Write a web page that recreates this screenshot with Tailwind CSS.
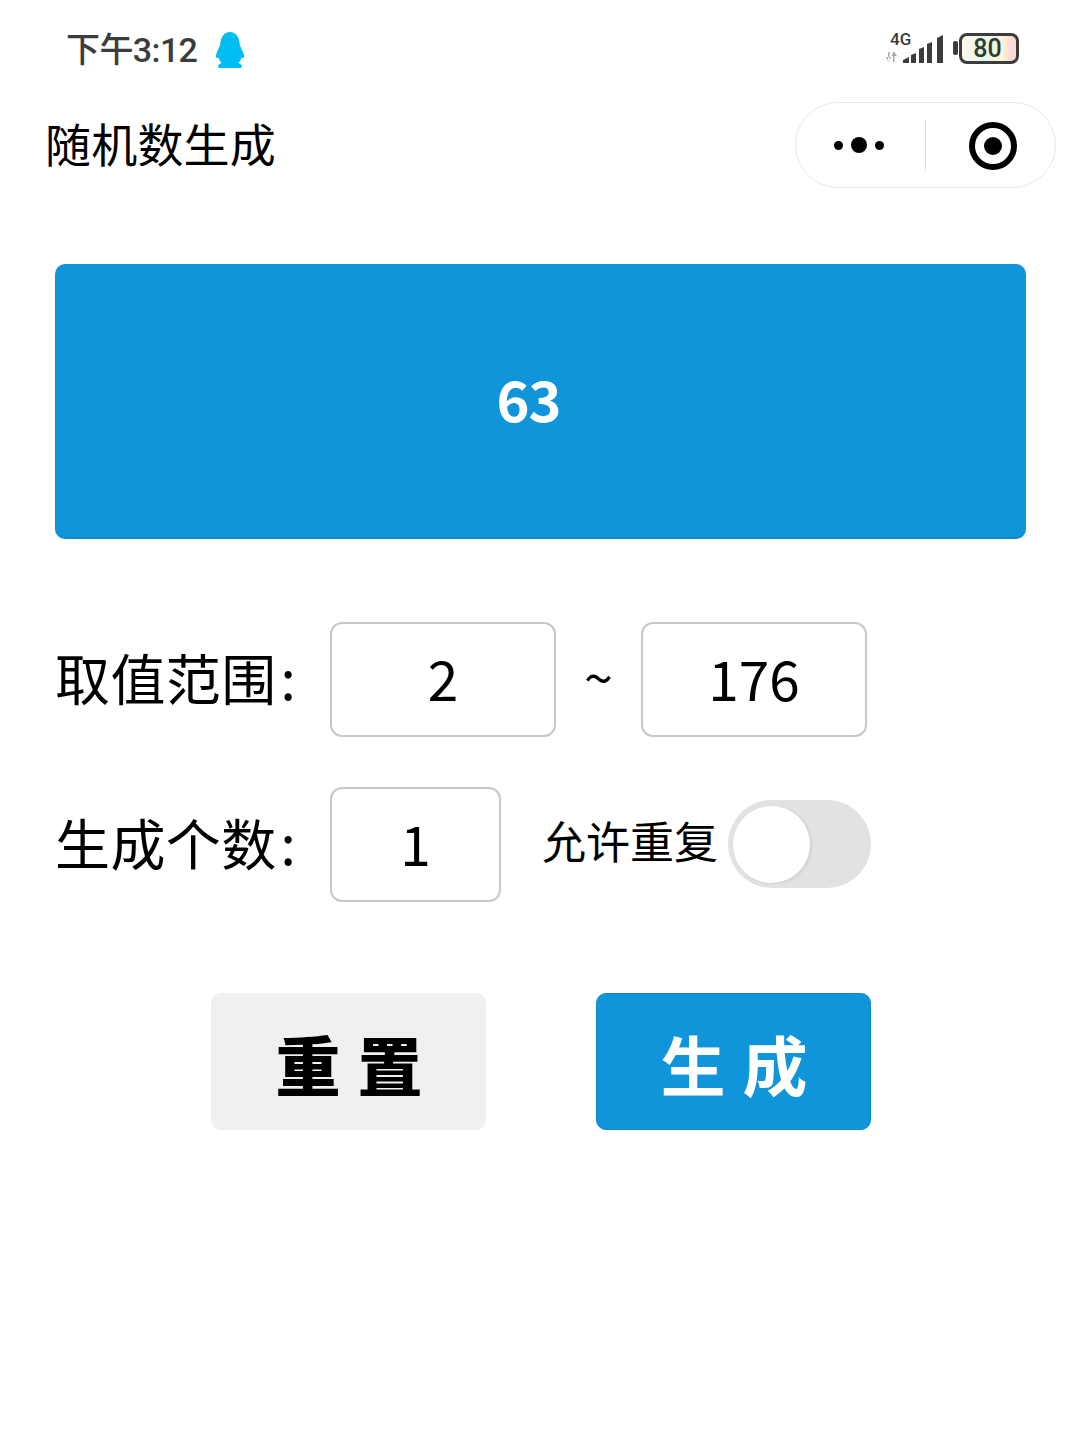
<!DOCTYPE html>
<html><head><meta charset="utf-8"><script src="https://cdn.jsdelivr.net/npm/@tailwindcss/browser@4"></script></head>
<body class="bg-white">
<div class="w-[1080px] h-[1440px] overflow-hidden bg-white text-black font-['Noto_Sans_CJK_SC','Noto_Sans',sans-serif]">
  <!-- status bar -->
  <div class="h-[102px] flex justify-between pl-[66px] pr-[61px] pt-[28px] items-start">
    <div class="flex items-center h-[44px]">
      <span class="text-[34px] leading-[44px] text-[#3c3c3c] font-medium tracking-[-0.6px] font-['Roboto','Noto_Sans_CJK_SC',sans-serif]">下午3:12</span>
      <svg class="ml-[17px]" width="32" height="38" viewBox="0 0 32 38"><path fill="#00bdf2" d="M16 1c6 0 9 5 9.500 11 .2 3 3 7 4.500 12 .6 2.500-.5 4-2.500 2.500-.5 2-1.500 4-3 5.500 2 .8 3.500 2 3.500 3.500 0 .8-1 1.500-2.500 1.500H6.500C5 37 4 36.300 4 35.500 4 34 5.500 32.800 7.500 32 6 30.500 5 28.500 4.500 26.500 2.500 28 1.400 26.500 2 24 3.500 19 6.300 15 6.500 12 7 6 10 1 16 1z"/></svg>
    </div>
    <div class="flex items-start">
      <div class="relative w-[58px] h-[36px]">
        <span class="absolute left-[4px] top-[1px] text-[17px] leading-[20px] font-medium text-[#3c3c3c] font-['Roboto',sans-serif]">4G</span>
        <svg class="absolute left-0 top-0" width="58" height="36" viewBox="0 0 58 36"><path fill="#aaa" d="M2 24h1.500v10H2zM0 29l2.700 5 2.700-5zM7 24h1.500v10H7zM5.500 28l2.700-4.500 2.700 4.500z"/><path fill="#3c3c3c" d="M17 35v-3l6-3v6zM25 35v-8l5-2v10zM33 35V21l5-2v16zM41 35V16l5-2v21zM51 35V10l6-3v28z"/></svg>
      </div>
      <div class="w-[5px] h-[14px] bg-[#3c3c3c] rounded-[2px] ml-[9px] mt-[13px]"></div>
      <div class="ml-[1px] mt-[5px] w-[60px] h-[31px] rounded-[8px] border-[3px] border-[#3c3c3c] bg-[linear-gradient(90deg,#fff8e8_0%,#e3f5ec_40%,#fdf5d5_75%,#fcd9d9_90%)] flex items-center justify-center pr-[3px] text-[25px] leading-none font-medium text-[#2e3a32] font-['Roboto',sans-serif]">80</div>
    </div>
  </div>
  <!-- nav bar -->
  <div class="h-[86px] flex items-center justify-between pl-[45px] pr-[24px]">
    <span class="text-[46px] leading-[86px] tracking-[0.2px] -mt-[6px]">随机数生成</span>
    <div class="w-[261px] h-[86px] rounded-full border border-[#e8e8e8] flex items-center">
      <div class="w-[129px] h-full flex items-center justify-center gap-[8px] pr-[3px]">
        <span class="w-[9px] h-[9px] rounded-full bg-black"></span>
        <span class="w-[16px] h-[16px] rounded-full bg-black"></span>
        <span class="w-[9px] h-[9px] rounded-full bg-black"></span>
      </div>
      <div class="w-px h-[52px] bg-[#e0e0e0]"></div>
      <div class="flex-1 flex items-center justify-center pl-[4px] pt-[2px]">
        <div class="w-[48px] h-[48px] rounded-full border-[6px] border-black flex items-center justify-center"><div class="w-[18px] h-[18px] rounded-full bg-black"></div></div>
      </div>
    </div>
  </div>
  <!-- content -->
  <div class="pl-[55px] pt-[76px]">
    <div class="w-[971px] h-[275px] rounded-[10px] bg-[#1095da] border-b-2 border-[#0e88c9] flex items-center justify-center pr-[24px] pb-[5px] text-white text-[56px] font-semibold tracking-[-1px]">63</div>

    <div class="mt-[82px] flex items-center h-[116px]">
      <span class="w-[275px] text-[55px] leading-[70px] -mt-[6px] tracking-[0.4px]">取值范围<span class="ml-[4px]">:</span></span>
      <div class="w-[226px] h-[115px] rounded-[12px] border-2 border-[#c8c8c8] flex items-center justify-center pb-[4px] text-[55px] leading-none">2</div>
      <span class="w-[85px] text-center text-[52px] leading-[60px] -mt-[6px]">~</span>
      <div class="w-[226px] h-[115px] rounded-[12px] border-2 border-[#c8c8c8] flex items-center justify-center pb-[4px] text-[55px] leading-none">176</div>
    </div>

    <div class="mt-[49px] flex items-center h-[116px]">
      <span class="w-[275px] text-[55px] leading-[70px] -mt-[6px] tracking-[0.4px]">生成个数<span class="ml-[4px]">:</span></span>
      <div class="w-[171px] h-[115px] rounded-[12px] border-2 border-[#c8c8c8] flex items-center justify-center pb-[4px] text-[55px] leading-none">1</div>
      <span class="ml-[41px] w-[186px] text-[44px] leading-[56px] -mt-[9px]">允许重复</span>
      <div class="relative w-[143px] h-[88px] rounded-full bg-[#e2e2e2] -mt-[1px]">
        <div class="absolute left-[5px] top-[6px] w-[77px] h-[77px] rounded-full bg-white shadow-[2px_1px_3px_rgba(0,0,0,0.08)]"></div>
      </div>
    </div>

    <div class="mt-[91px] flex pl-[156px] gap-[110px]">
      <div class="w-[275px] h-[137px] rounded-[10px] bg-[#f0f0f0] flex items-center justify-center text-[65px] font-black tracking-[17px] pl-[18px] pt-[4px] leading-none">重置</div>
      <div class="w-[275px] h-[137px] rounded-[10px] bg-[#1095da] border border-[#0e88c9] flex items-center justify-center text-[65px] font-bold text-white tracking-[17px] pl-[18px] pt-[4px] leading-none">生成</div>
    </div>
  </div>
</div>
</body></html>
